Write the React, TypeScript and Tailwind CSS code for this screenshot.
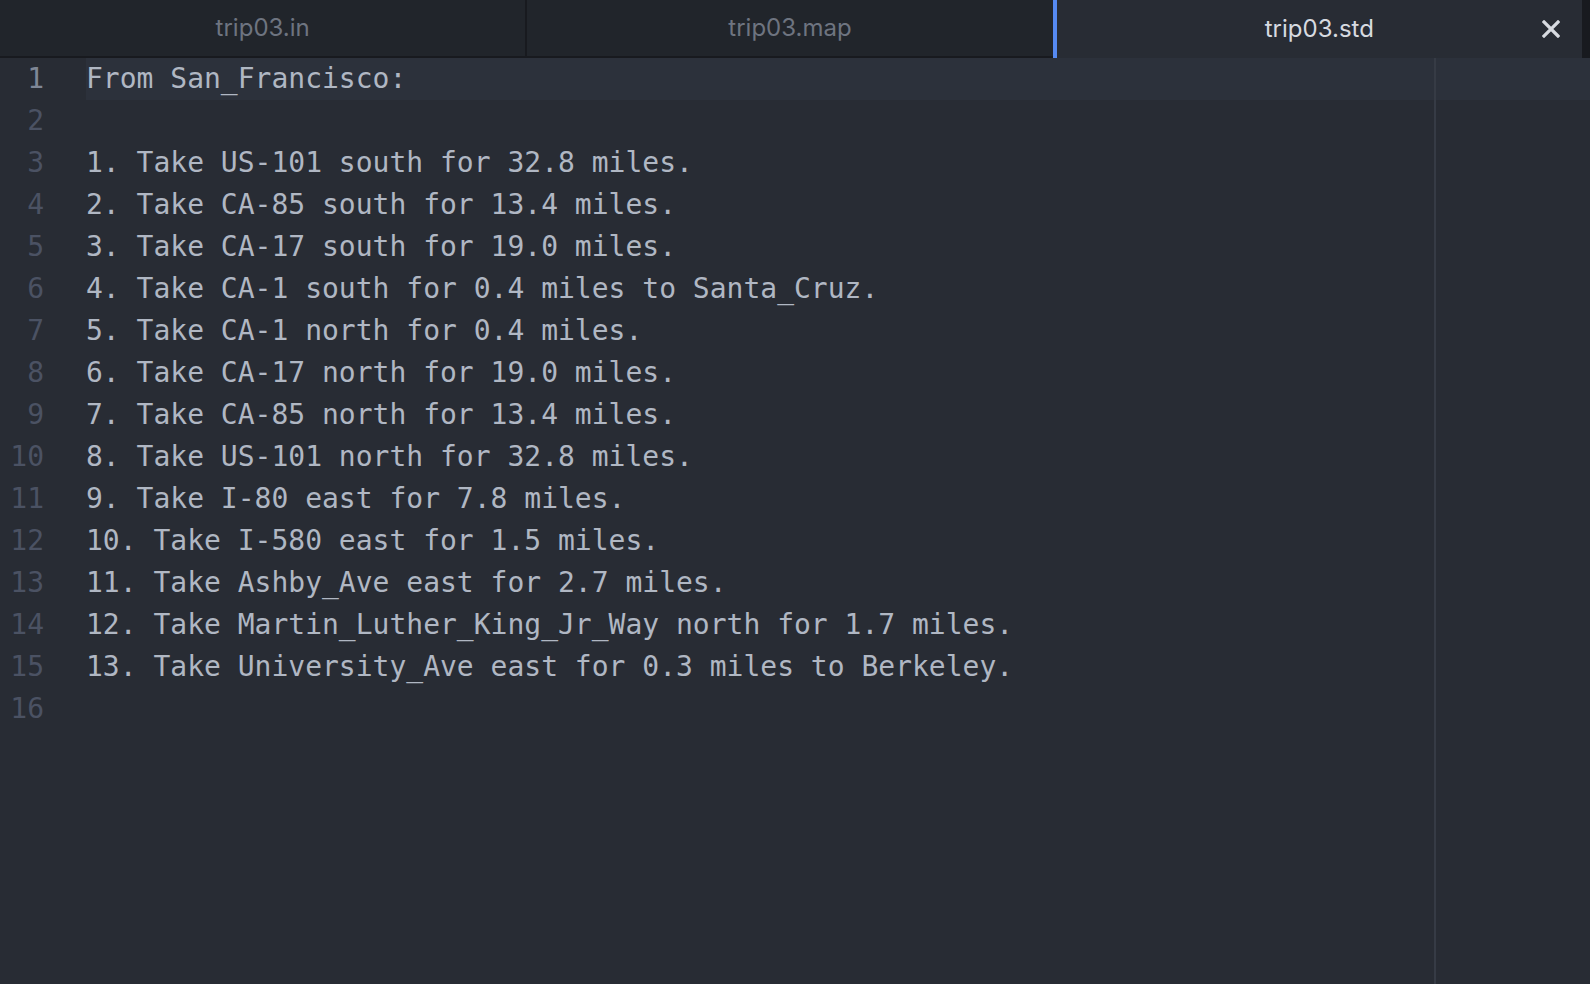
const lines: string[] = [
  'From San_Francisco:',
  '',
  '1. Take US-101 south for 32.8 miles.',
  '2. Take CA-85 south for 13.4 miles.',
  '3. Take CA-17 south for 19.0 miles.',
  '4. Take CA-1 south for 0.4 miles to Santa_Cruz.',
  '5. Take CA-1 north for 0.4 miles.',
  '6. Take CA-17 north for 19.0 miles.',
  '7. Take CA-85 north for 13.4 miles.',
  '8. Take US-101 north for 32.8 miles.',
  '9. Take I-80 east for 7.8 miles.',
  '10. Take I-580 east for 1.5 miles.',
  '11. Take Ashby_Ave east for 2.7 miles.',
  '12. Take Martin_Luther_King_Jr_Way north for 1.7 miles.',
  '13. Take University_Ave east for 0.3 miles to Berkeley.',
  '',
];

function CloseIcon() {
  return (
    <svg width="18" height="18" viewBox="0 0 18 18" className="text-[#d7dae0]">
      <path d="M2 2 L16 16 M16 2 L2 16" stroke="currentColor" strokeWidth="3.2" strokeLinecap="square" />
    </svg>
  );
}

function TabBar() {
  return (
    <div className="flex h-[58px] bg-[#21252b] font-['Inter',sans-serif] text-[24px] shrink-0">
      <div className="flex-1 flex items-center justify-center border-r-2 border-b-2 border-[#181a1f] text-[#6e7480]">
        trip03.in
      </div>
      <div className="flex-1 flex items-center justify-center border-b-2 border-[#181a1f] text-[#6e7480]">
        trip03.map
      </div>
      <div className="flex-1 relative flex items-center justify-center bg-[#282c34] border-l-4 border-[#568af2] text-[#d7dae0]">
        trip03.std
        <div className="absolute right-[22px] top-[20px]">
          <CloseIcon />
        </div>
      </div>
      <div className="w-2 bg-[#181a1f]" />
    </div>
  );
}

export default function App() {
  return (
    <div className="h-screen w-full flex flex-col bg-[#282c34] overflow-hidden">
      <TabBar />
      <div className="flex-1 flex font-['DejaVu_Sans_Mono',monospace] text-[28px] leading-[42px]">
        <div className="w-[86px] shrink-0 pr-[42px] text-right text-[#4b5263]">
          {lines.map((_, i) => (
            <div key={i} className={i === 0 ? 'text-[#7f8796]' : ''}>
              {i + 1}
            </div>
          ))}
        </div>
        <div className="flex-1 relative text-[#b0b7c3]">
          <div className="absolute top-0 bottom-0 left-[1348px] w-[2px] bg-[#363b45]" />
          {lines.map((line, i) => (
            <div key={i} className={`h-[42px] whitespace-pre ${i === 0 ? 'bg-[#2c313b]' : ''}`}>
              {line}
            </div>
          ))}
        </div>
      </div>
    </div>
  );
}
